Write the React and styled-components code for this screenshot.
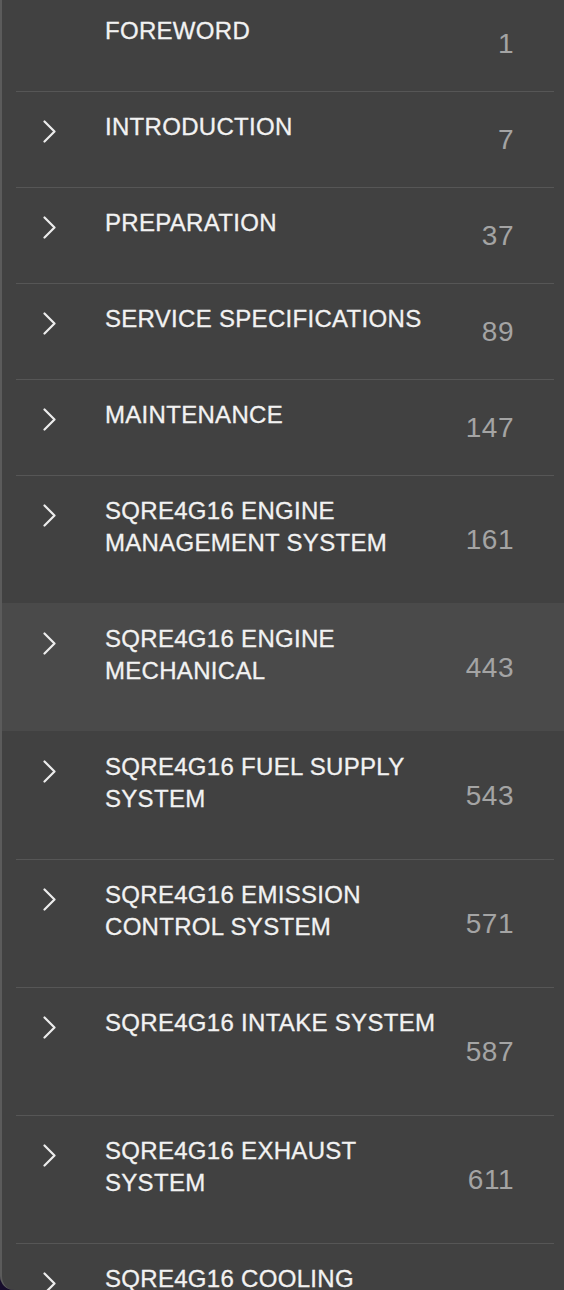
import React from 'react';
import styled, { createGlobalStyle } from 'styled-components';

const GlobalStyle = createGlobalStyle`
  html, body {
    margin: 0;
    padding: 0;
    background: #170d2c;
  }
`;

const chapters = [
  { title: 'FOREWORD', page: 1, leaf: true },
  { title: 'INTRODUCTION', page: 7 },
  { title: 'PREPARATION', page: 37 },
  { title: 'SERVICE SPECIFICATIONS', page: 89 },
  { title: 'MAINTENANCE', page: 147 },
  { title: 'SQRE4G16 ENGINE MANAGEMENT SYSTEM', page: 161 },
  { title: 'SQRE4G16 ENGINE MECHANICAL', page: 443, selected: true },
  { title: 'SQRE4G16 FUEL SUPPLY SYSTEM', page: 543 },
  { title: 'SQRE4G16 EMISSION CONTROL SYSTEM', page: 571 },
  { title: 'SQRE4G16 INTAKE SYSTEM', page: 587, lines: 2 },
  { title: 'SQRE4G16 EXHAUST SYSTEM', page: 611 },
  { title: 'SQRE4G16 COOLING SYSTEM', page: 627 },
];

const Panel = styled.nav`
  width: 564px;
  height: 1290px;
  box-sizing: border-box;
  overflow: hidden;
  background: #414141;
  border-left: 2px solid #5b5b5b;
  border-bottom-left-radius: 14px;
  font-family: 'Liberation Sans', Arial, sans-serif;
`;

const List = styled.ul`
  list-style: none;
  margin: -5px 0 0;
  padding: 0;
`;

// divider drawn as an inset 1px background line at the top of each row
const Row = styled.li`
  display: grid;
  grid-template-columns: 103px 355px 1fr;
  padding-right: 51px;
  background: ${p => p.selected
    ? '#4a4a4a'
    : p.noLine
      ? 'transparent'
      : 'linear-gradient(#565656, #565656) no-repeat 14px 0 / 538px 1px'};
  cursor: pointer;
`;

const Chevron = styled.div`
  padding: 29px 0 0 41px;
  color: #ececec;
`;

const Title = styled.div`
  min-height: ${p => (p.lines || 1) * 32}px;
  padding: 20px 0 44px;
  font-size: 24px;
  line-height: 32px;
  letter-spacing: 0.3px;
  color: #f2f2f2;
  -webkit-text-stroke: 0.3px #f2f2f2;
`;

const Page = styled.div`
  align-self: center;
  justify-self: end;
  padding-top: 2px;
  margin-right: -1px;
  font-size: 28px;
  letter-spacing: 0.5px;
  color: #a4a4a4;
`;

function Arrow() {
  return (
    <svg width="13" height="23" viewBox="0 0 13 23" fill="none">
      <polyline points="1.5,1.5 11.5,11.5 1.5,21.5" stroke="currentColor" strokeWidth="2.2" strokeLinecap="round" strokeLinejoin="round" />
    </svg>
  );
}

export default function App() {
  return (
    <>
      <GlobalStyle />
      <Panel>
        <List>
          {chapters.map((c, i) => (
            <Row
              key={c.title}
              selected={c.selected}
              noLine={i === 0 || (chapters[i - 1] && chapters[i - 1].selected)}
            >
              <Chevron>{!c.leaf && <Arrow />}</Chevron>
              <Title lines={c.lines}>{c.title}</Title>
              <Page>{c.page}</Page>
            </Row>
          ))}
        </List>
      </Panel>
    </>
  );
}
